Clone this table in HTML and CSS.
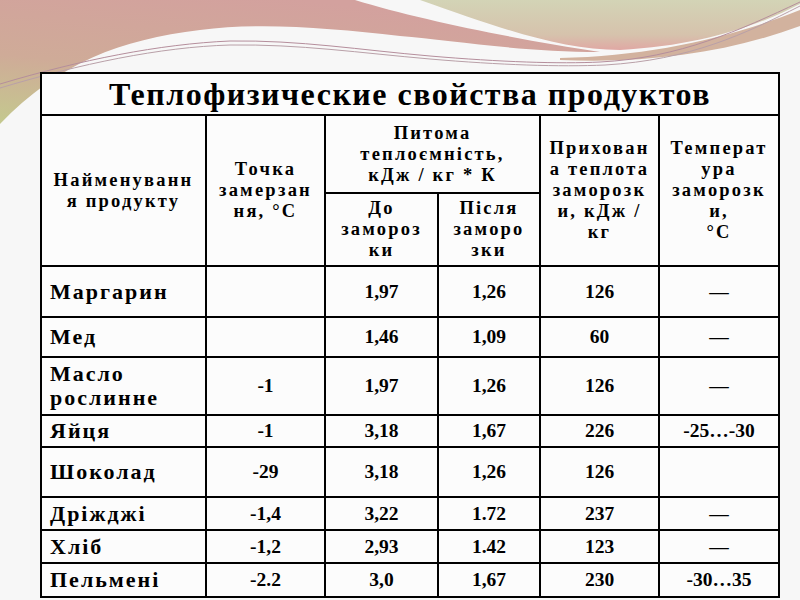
FILE: index.html
```html
<!DOCTYPE html>
<html lang="uk">
<head>
<meta charset="utf-8">
<title>Теплофизические свойства продуктов</title>
<link rel="stylesheet" href="styles.css">
</head>
<body>
<div class="slide">
  <svg class="decor" width="800" height="140" viewBox="0 0 800 140" aria-hidden="true">
    <defs>
      <linearGradient id="gLeft" x1="0.5" y1="0" x2="0" y2="1">
        <stop offset="0" stop-color="#d3a19e"/>
        <stop offset="0.55" stop-color="#cfab98"/>
        <stop offset="1" stop-color="#c4c98e"/>
      </linearGradient>
      <linearGradient id="gRight" x1="0" y1="0" x2="0" y2="1">
        <stop offset="0" stop-color="#d3d4b6"/>
        <stop offset="0.7" stop-color="#d6c2ac"/>
        <stop offset="1" stop-color="#e0a8a4"/>
      </linearGradient>
    </defs>
    <path d="M0,0 H355 C420,20 520,40 600,52 C520,52 450,40 400,36 C330,28 260,22 200,30 C120,40 60,62 0,124 Z" fill="url(#gLeft)"/>
    <path d="M420,0 H800 V4 C760,25 700,46 620,50 C560,50 500,28 420,0 Z" fill="url(#gRight)"/>
    <path d="M560,58 C650,56 730,38 800,10 V26 C730,52 650,64 560,60 Z" fill="#d2b29e"/>
    <path d="M0,84 C80,60 160,44 230,41 C300,40 360,50 430,56 C500,62 560,64 600,62 C680,58 740,30 800,2" fill="none" stroke="#b58e9c" stroke-width="1"/>
    <path d="M0,88 C80,64 160,47 230,45 C300,44 360,53 430,59 C500,65 560,67 605,65 C690,60 745,34 800,6" fill="none" stroke="#b9a0a8" stroke-width="1"/>
  </svg>

  <table class="props">
    <colgroup>
      <col class="c1"><col class="c2"><col class="c3"><col class="c4"><col class="c5"><col class="c6">
    </colgroup>
    <tr class="r-title">
      <th colspan="6" class="title">Теплофизические свойства продуктов</th>
    </tr>
    <tr class="r-h1">
      <th rowspan="2" class="hd">Найменуванн<br>я продукту</th>
      <th rowspan="2" class="hd">Точка<br>замерзан<br>ня, °C</th>
      <th colspan="2" class="hd">Питома<br>теплоємність,<br>кДж / кг * К</th>
      <th rowspan="2" class="hd">Прихован<br>а теплота<br>заморозк<br>и, кДж /<br>кг</th>
      <th rowspan="2" class="hd">Температ<br>ура<br>заморозк<br>и,<br>°C</th>
    </tr>
    <tr class="r-h2">
      <th class="hd">До<br>замороз<br>ки</th>
      <th class="hd">Після<br>заморо<br>зки</th>
    </tr>
    <tr class="r1"><td class="name">Маргарин</td><td></td><td>1,97</td><td>1,26</td><td>126</td><td>—</td></tr>
    <tr class="r2"><td class="name">Мед</td><td></td><td>1,46</td><td>1,09</td><td>60</td><td>—</td></tr>
    <tr class="r3"><td class="name">Масло<br>рослинне</td><td>-1</td><td>1,97</td><td>1,26</td><td>126</td><td>—</td></tr>
    <tr class="r4"><td class="name">Яйця</td><td>-1</td><td>3,18</td><td>1,67</td><td>226</td><td>-25…-30</td></tr>
    <tr class="r5"><td class="name">Шоколад</td><td>-29</td><td>3,18</td><td>1,26</td><td>126</td><td></td></tr>
    <tr class="r6"><td class="name">Дріжджі</td><td>-1,4</td><td>3,22</td><td>1.72</td><td>237</td><td>—</td></tr>
    <tr class="r7"><td class="name">Хліб</td><td>-1,2</td><td>2,93</td><td>1.42</td><td>123</td><td>—</td></tr>
    <tr class="r8"><td class="name">Пельмені</td><td>-2.2</td><td>3,0</td><td>1,67</td><td>230</td><td>-30…35</td></tr>
  </table>
</div>
</body>
</html>
```

FILE: styles.css
```css
html, body {
  margin: 0;
  padding: 0;
  background: #f7f7f7;
}

.slide {
  position: relative;
  width: 800px;
  height: 600px;
  overflow: hidden;
  padding: 72px 0 0 40px;
  box-sizing: border-box;
  background: #f7f7f7;
}

.decor {
  position: absolute;
  left: 0;
  top: 0;
  z-index: 0;
}

.props {
  position: relative;
  z-index: 1;
  border-collapse: collapse;
  table-layout: fixed;
  width: 740px;
  background: #fcfcfc;
  color: #000;
}

.c1 { width: 165px; }
.c2 { width: 119px; }
.c3 { width: 113px; }
.c4 { width: 102px; }
.c5 { width: 119px; }
.c6 { width: 120px; }

.props th,
.props td {
  border: 2px solid #000;
  padding: 0;
  text-align: center;
  vertical-align: middle;
  white-space: nowrap;
  overflow: hidden;
}

.title {
  font-family: "Liberation Serif", "Times New Roman", serif;
  font-weight: bold;
  font-size: 32px;
  letter-spacing: 1.5px;
  height: 40px;
  line-height: 32px;
}

.hd {
  font-family: "Liberation Serif", "Times New Roman", serif;
  font-weight: bold;
  font-size: 18.5px;
  letter-spacing: 2.2px;
  line-height: 21px;
}

.r-h1 .hd { height: 76px; }
.r-h2 .hd { height: 71px; }

.props td {
  font-family: "Liberation Serif", "Times New Roman", serif;
  font-weight: bold;
  font-size: 19.5px;
  line-height: 22px;
}

.props td.name {
  font-size: 22px;
  letter-spacing: 2px;
  line-height: 24px;
  text-align: left;
  padding-left: 8px;
}

.r1 td { height: 49px; }
.r2 td { height: 38px; }
.r3 td { height: 56px; }
.r4 td { height: 30px; }
.r5 td { height: 48px; }
.r6 td { height: 31px; }
.r7 td { height: 31px; }
.r8 td { height: 32px; }
```
